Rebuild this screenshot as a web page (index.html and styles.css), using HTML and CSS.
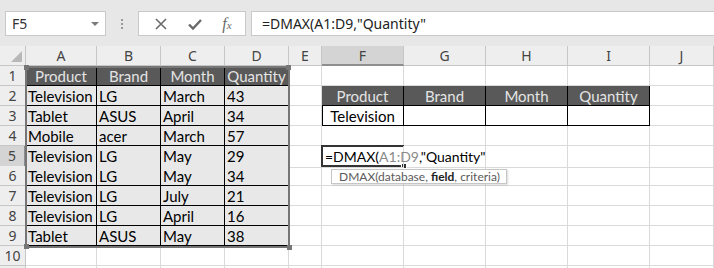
FILE: index.html
```html
<!DOCTYPE html>
<html lang="en">
<head>
    <meta charset="UTF-8">
    <title>DMAX - Quantity</title>
    <link rel="stylesheet" href="styles.css">
</head>
<body>
    <!-- Formula bar -->
    <div class="toolbar">
        <div class="name-box">
            <span>F5</span>
            <span class="caret"></span>
        </div>
        <div class="grip"><i></i><i></i><i></i></div>
        <div class="fx-box">
            <svg class="icon" width="14" height="14" viewBox="0 0 14 14"><path d="M2 2 L12 12 M12 2 L2 12" stroke="#6a6a6a" stroke-width="1.6" fill="none"/></svg>
            <svg class="icon" width="16" height="14" viewBox="0 0 16 14"><path d="M2 7.5 L6 11.5 L14 3" stroke="#6a6a6a" stroke-width="2.4" fill="none"/></svg>
            <span class="fx">f<sub>x</sub></span>
        </div>
        <div class="formula-input">=DMAX(A1:D9,"Quantity"</div>
    </div>

    <!-- Worksheet -->
    <div class="sheet">
        <div class="row head">
            <div class="c corner"></div>
            <div class="c">A</div><div class="c">B</div><div class="c">C</div><div class="c">D</div>
            <div class="c">E</div><div class="c active-col">F</div><div class="c">G</div><div class="c">H</div><div class="c">I</div><div class="c">J</div>
        </div>
        <div class="row">
            <div class="c rh">1</div>
            <div class="c th">Product</div><div class="c th">Brand</div><div class="c th">Month</div><div class="c th">Quantity</div>
            <div class="c"></div><div class="c"></div><div class="c"></div><div class="c"></div><div class="c"></div><div class="c"></div>
        </div>
        <div class="row">
            <div class="c rh">2</div>
            <div class="c td">Television</div><div class="c td">LG</div><div class="c td">March</div><div class="c td">43</div>
            <div class="c"></div><div class="c th">Product</div><div class="c th">Brand</div><div class="c th">Month</div><div class="c th">Quantity</div><div class="c"></div>
        </div>
        <div class="row">
            <div class="c rh">3</div>
            <div class="c td">Tablet</div><div class="c td">ASUS</div><div class="c td">April</div><div class="c td">34</div>
            <div class="c"></div><div class="c crit first">Television</div><div class="c crit"></div><div class="c crit"></div><div class="c crit"></div><div class="c"></div>
        </div>
        <div class="row">
            <div class="c rh">4</div>
            <div class="c td">Mobile</div><div class="c td">acer</div><div class="c td">March</div><div class="c td">57</div>
            <div class="c"></div><div class="c"></div><div class="c"></div><div class="c"></div><div class="c"></div><div class="c"></div>
        </div>
        <div class="row">
            <div class="c rh active-row">5</div>
            <div class="c td">Television</div><div class="c td">LG</div><div class="c td">May</div><div class="c td">29</div>
            <div class="c"></div>
            <div class="c editing">=DMAX(<span class="ref">A1:D9</span>,"Quantity"</div>
            <div class="c"></div><div class="c"></div><div class="c"></div><div class="c"></div>
        </div>
        <div class="row">
            <div class="c rh">6</div>
            <div class="c td">Television</div><div class="c td">LG</div><div class="c td">May</div><div class="c td">34</div>
            <div class="c"></div><div class="c"></div><div class="c"></div><div class="c"></div><div class="c"></div><div class="c"></div>
        </div>
        <div class="row">
            <div class="c rh">7</div>
            <div class="c td">Television</div><div class="c td">LG</div><div class="c td">July</div><div class="c td">21</div>
            <div class="c"></div><div class="c"></div><div class="c"></div><div class="c"></div><div class="c"></div><div class="c"></div>
        </div>
        <div class="row">
            <div class="c rh">8</div>
            <div class="c td">Television</div><div class="c td">LG</div><div class="c td">April</div><div class="c td">16</div>
            <div class="c"></div><div class="c"></div><div class="c"></div><div class="c"></div><div class="c"></div><div class="c"></div>
        </div>
        <div class="row">
            <div class="c rh">9</div>
            <div class="c td">Tablet</div><div class="c td">ASUS</div><div class="c td">May</div><div class="c td">38</div>
            <div class="c"></div><div class="c"></div><div class="c"></div><div class="c"></div><div class="c"></div><div class="c"></div>
        </div>
        <div class="row">
            <div class="c rh">10</div>
            <div class="c"></div><div class="c"></div><div class="c"></div><div class="c"></div>
            <div class="c"></div><div class="c"></div><div class="c"></div><div class="c"></div><div class="c"></div><div class="c"></div>
        </div>
        <div class="row">
            <div class="c rh"></div>
            <div class="c"></div><div class="c"></div><div class="c"></div><div class="c"></div>
            <div class="c"></div><div class="c"></div><div class="c"></div><div class="c"></div><div class="c"></div><div class="c"></div>
        </div>

        <!-- Range reference A1:D9 -->
        <div class="range">
            <span class="handle tl"></span><span class="handle tr"></span>
            <span class="handle bl"></span><span class="handle br"></span>
        </div>

        <!-- Edit cell outline F5 -->
        <div class="edit-box"><span class="fill-handle"></span></div>

        <!-- Function tooltip -->
        <div class="tip">DMAX(database, <b>field</b>, criteria)</div>
    </div>
</body>
</html>
```

FILE: styles.css
```css
* {
    margin: 0;
    padding: 0;
    box-sizing: border-box;
}

body {
    width: 714px;
    height: 268px;
    overflow: hidden;
    background: #ffffff;
    font-family: 'Noto Sans', sans-serif;
}

/* ---------- formula bar ---------- */

.toolbar {
    height: 46px;
    background: #e7e7e7;
    display: flex;
    align-items: flex-start;
    padding: 11px 0 0 5px;
}

.name-box,
.fx-box,
.formula-input {
    height: 25px;
    background: #ffffff;
    border: 1px solid #c9c9c9;
}

.name-box {
    width: 101px;
    display: flex;
    align-items: center;
    justify-content: space-between;
    padding: 0 6px 0 6px;
    font-size: 14px;
    color: #333333;
}

.caret {
    width: 0;
    height: 0;
    border-left: 4px solid transparent;
    border-right: 4px solid transparent;
    border-top: 4px solid #7a7a7a;
}

.grip {
    width: 32px;
    height: 25px;
    display: flex;
    flex-direction: column;
    align-items: center;
    justify-content: center;
    gap: 2px;
}

.grip i {
    width: 2px;
    height: 2px;
    background: #9a9a9a;
}

.fx-box {
    width: 108px;
    display: flex;
    align-items: center;
    justify-content: space-around;
    padding: 0 4px 0 6px;
}

.fx {
    font-family: 'Liberation Serif', serif;
    font-style: italic;
    font-size: 16px;
    color: #6a6a6a;
}

.fx sub {
    font-size: 11px;
    vertical-align: 0;
}

.formula-input {
    flex: 1;
    margin-left: 5px;
    border-right: none;
    padding-left: 10px;
    font-size: 14px;
    line-height: 23px;
    color: #222222;
}

/* ---------- worksheet ---------- */

.sheet {
    position: relative;
    font-family: 'Lato', sans-serif;
    font-size: 15px;
}

.row {
    display: grid;
    grid-template-columns: 26px 71px 64px 64px 64px 33px 82px 82px 82px 82px 64px;
    height: 20px;
}

.c {
    border-right: 1px solid #dadada;
    border-bottom: 1px solid #dadada;
    padding: 0 2px;
    line-height: 20px;
    white-space: nowrap;
    overflow: hidden;
    color: #000000;
}

.head .c,
.rh {
    background: #eeeeee;
    border-color: #c6c6c6;
    color: #444444;
    font-family: 'Noto Sans', sans-serif;
    font-size: 14px;
    text-align: center;
    line-height: 19px;
}

.corner {
    position: relative;
}

.corner::after {
    content: "";
    position: absolute;
    right: 3px;
    bottom: 3px;
    border-left: 11px solid transparent;
    border-bottom: 11px solid #b8b8b8;
}

.head .active-col {
    background: #d4d4d4;
    border-bottom: 2px solid #8e8e8e;
}

.rh.active-row {
    background: #d4d4d4;
    border-right: 2px solid #8e8e8e;
}

.th {
    background: #595959;
    color: #e4e4e4;
    text-align: center;
    border-color: #000000;
}

.td {
    background: #e8e8e8;
    border-color: #000000;
}

.crit {
    text-align: center;
    border-color: #000000;
}

.crit.first {
    box-shadow: inset 1px 0 0 #000000;
}

.editing {
    overflow: visible;
    position: relative;
    z-index: 3;
    padding-left: 3px;
    font-size: 14px;
    line-height: 21px;
}

.ref {
    color: #8a8a8a;
}

/* ---------- overlays ---------- */

.range {
    position: absolute;
    left: 25px;
    top: 20px;
    width: 265px;
    height: 182px;
    border: 2px solid #767676;
    z-index: 2;
}

.handle {
    position: absolute;
    width: 5px;
    height: 5px;
    background: #767676;
}

.handle.tl { left: -3px; top: -3px; }
.handle.tr { right: -3px; top: -3px; }
.handle.bl { left: -3px; bottom: -3px; }
.handle.br { right: -4px; bottom: -4px; }

.edit-box {
    position: absolute;
    left: 321px;
    top: 99px;
    width: 83px;
    height: 22px;
    border: 2px solid #333333;
    border-right: none;
    z-index: 2;
}

.fill-handle {
    position: absolute;
    right: -3px;
    bottom: -4px;
    width: 6px;
    height: 6px;
    background: #333333;
    border: 1px solid #ffffff;
}

.tip {
    position: absolute;
    left: 331px;
    top: 123px;
    height: 15px;
    padding: 0 6px 0 7px;
    background: #ffffff;
    border: 1px solid #c6c6c6;
    box-shadow: 1px 1px 2px rgba(0, 0, 0, 0.15);
    font-family: 'Lato', sans-serif;
    font-size: 12px;
    line-height: 13px;
    color: #5a5a5a;
    z-index: 4;
}

.tip b {
    color: #222222;
}
```
